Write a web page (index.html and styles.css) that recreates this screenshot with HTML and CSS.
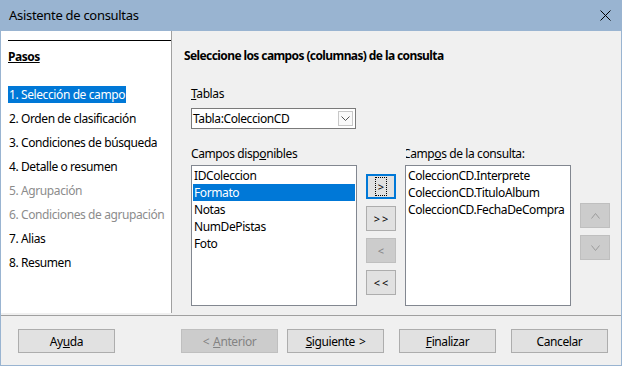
FILE: index.html
```html
<!DOCTYPE html>
<html lang="es">
<head>
<meta charset="utf-8">
<title>Asistente de consultas</title>
<link rel="stylesheet" href="styles.css">
</head>
<body>
<div class="window">
  <div class="titlebar">
    <span class="title">Asistente de consultas</span>
    <svg class="close" width="11" height="11" viewBox="0 0 11 11"><path d="M0.5 0.5L10.5 10.5M10.5 0.5L0.5 10.5" stroke="#000" stroke-width="1" fill="none"/></svg>
  </div>
  <div class="frame">
    <div class="main">
      <div class="steps">
        <div class="steps-head"><span class="pasos">Pasos</span></div>
        <ul class="step-list">
          <li class="step"><span class="step-sel">1. Selección de campo</span></li>
          <li class="step"><span>2. Orden de clasificación</span></li>
          <li class="step"><span>3. Condiciones de búsqueda</span></li>
          <li class="step"><span>4. Detalle o resumen</span></li>
          <li class="step step-off"><span>5. Agrupación</span></li>
          <li class="step step-off"><span>6. Condiciones de agrupación</span></li>
          <li class="step"><span>7. Alias</span></li>
          <li class="step"><span>8. Resumen</span></li>
        </ul>
      </div>
      <div class="content">
        <h1 class="heading">Seleccione los campos (columnas) de la consulta</h1>
        <div class="field">
          <div class="lbl"><u>T</u>ablas</div>
          <div class="combo">
            <span>Tabla:ColeccionCD</span>
            <span class="combo-btn"><svg width="9" height="5" viewBox="0 0 9 5"><path d="M0.5 0.5L4.5 4.5L8.5 0.5" stroke="#555" stroke-width="1" fill="none"/></svg></span>
          </div>
        </div>
        <div class="lists">
          <div class="listcol">
            <div class="lbl">Campos disp<u>o</u>nibles</div>
            <div class="listbox">
              <div class="item">IDColeccion</div>
              <div class="item item-sel">Formato</div>
              <div class="item">Notas</div>
              <div class="item">NumDePistas</div>
              <div class="item">Foto</div>
            </div>
          </div>
          <div class="btncol">
            <div class="sbtn sbtn-focus"><span class="ring">&gt;</span></div>
            <div class="sbtn dbl">&gt;&gt;</div>
            <div class="sbtn sbtn-off">&lt;</div>
            <div class="sbtn dbl">&lt;&lt;</div>
          </div>
          <div class="listcol">
            <div class="lbl lbl-clip"><span>Camp<u>o</u>s de la consulta:</span></div>
            <div class="listbox">
              <div class="item">ColeccionCD.Interprete</div>
              <div class="item">ColeccionCD.TituloAlbum</div>
              <div class="item">ColeccionCD.FechaDeCompra</div>
            </div>
          </div>
          <div class="btncol btncol-ud">
            <div class="sbtn sbtn-off"><svg width="9" height="6" viewBox="0 0 9 6"><path d="M0.5 5.5L4.5 0.5L8.5 5.5" stroke="#9c9c9c" stroke-width="1" fill="none"/></svg></div>
            <div class="sbtn sbtn-off"><svg width="9" height="6" viewBox="0 0 9 6"><path d="M0.5 0.5L4.5 5.5L8.5 0.5" stroke="#9c9c9c" stroke-width="1" fill="none"/></svg></div>
          </div>
        </div>
      </div>
    </div>
    <div class="divider"></div>
    <div class="footer">
      <div class="btn btn-help">Ay<u>u</u>da</div>
      <div class="btn btn-off btn-prev"><span class="lt">&lt;</span><u>A</u>nterior</div>
      <div class="btn btn-next"><u>S</u>iguiente<span class="gt">&gt;</span></div>
      <div class="btn btn-finish"><u>F</u>inalizar</div>
      <div class="btn btn-cancel">Cancelar</div>
    </div>
  </div>
</div>
</body>
</html>
```

FILE: styles.css
```css
* { box-sizing: border-box; }
html, body { margin: 0; padding: 0; }
body {
  font-family: "Noto Sans", sans-serif;
  font-size: 12px;
  letter-spacing: -0.4px;
  color: #000;
  background: #f0f0f0;
}
.window {
  width: 622px;
  height: 366px;
  display: flex;
  flex-direction: column;
  background: #f0f0f0;
  overflow: hidden;
}
.titlebar {
  height: 31px;
  flex: none;
  background: #99b4d1;
  display: flex;
  align-items: center;
  justify-content: space-between;
  padding: 0 11px 0 9px;
}
.title { font-size: 13px; line-height: 31px; letter-spacing: -0.3px; }
.close { display: block; }
.frame {
  flex: 1;
  display: flex;
  flex-direction: column;
  border: 1px solid #99b4d1;
  border-top: 0;
  min-height: 0;
}
.main { height: 282px; flex: none; display: flex; }
.steps {
  width: 171px;
  flex: none;
  background: #fff;
  border-right: 1px solid #a0a0a0;
  padding: 9px 0 0 7px;
}
.steps-head { border-top: 1px solid #000; padding-top: 7px; }
.pasos { font-weight: bold; text-decoration: underline; line-height: 17px; display: block; letter-spacing: -0.5px; }
.step-list { list-style: none; margin: 17px 0 0; padding: 0; }
.step { height: 24px; display: flex; align-items: center; white-space: nowrap; }
.step span { line-height: 17px; padding: 0 1px; }
.step-sel { background: #0078d7; color: #fff; }
.step-off { color: #8c8c8c; }
.content { flex: 1; padding: 16px 0 0 12px; }
.heading { margin: 0; font-size: 12px; font-weight: bold; line-height: 18px; letter-spacing: -0.6px; }
.field { margin: 20px 0 0 7px; }
.lbl { line-height: 17px; height: 17px; white-space: nowrap; }
.combo {
  margin-top: 6px;
  width: 165px;
  height: 21px;
  border: 1px solid #7a7a7a;
  background: #fff;
  display: flex;
  align-items: center;
  justify-content: space-between;
  padding: 0 2px 0 1px;
}
.combo-btn {
  width: 15px;
  height: 15px;
  border: 1px solid #c8c8c8;
  background: #fafafa;
  display: flex;
  align-items: center;
  justify-content: center;
}
.combo-btn svg { display: block; }
.lists { display: flex; gap: 9px; margin: 16px 0 0 7px; }
.listcol { width: 166px; flex: none; }
.listcol .lbl { margin-bottom: 3px; }
.lbl-clip { overflow: hidden; margin-left: 1px; text-indent: -3px; }
.listbox {
  height: 141px;
  border: 1px solid #828790;
  background: #fff;
  padding: 1px;
}
.item { line-height: 17px; padding-left: 1px; white-space: nowrap; }
.item-sel { background: #0078d7; color: #fff; }
.btncol {
  width: 30px;
  flex: none;
  display: flex;
  flex-direction: column;
  gap: 7px;
  padding-top: 29px;
}
.btncol-ud { padding-top: 58px; }
.sbtn {
  height: 25px;
  border: 1px solid #adadad;
  background: #e1e1e1;
  display: flex;
  align-items: center;
  justify-content: center;
  font-size: 11px;
  letter-spacing: 0;
}
.sbtn svg { display: block; }
.sbtn-focus { border: 2px solid #0078d7; }
.ring { border: 1px dotted #000; padding: 0 2px; line-height: 17px; }
.dbl { letter-spacing: 2px; padding-left: 2px; }
.sbtn-off { background: #cccccc; border-color: #bfbfbf; color: #838383; }
.divider { height: 1px; flex: none; background: #a0a0a0; margin-top: 2px; }
.footer { display: flex; padding: 13px 0 0 17px; }
.btn {
  width: 97px;
  height: 24px;
  flex: none;
  border: 1px solid #adadad;
  background: #e1e1e1;
  display: flex;
  align-items: center;
  justify-content: center;
  line-height: 17px;
}
.lt { margin-right: 4px; }
.gt { margin-left: 4px; }
.btn-off { background: #cccccc; border-color: #bfbfbf; color: #838383; }
.btn-prev { margin-left: 66px; }
.btn-next { margin-left: 9px; }
.btn-finish { margin-left: 15px; }
.btn-cancel { margin-left: 15px; }
```
